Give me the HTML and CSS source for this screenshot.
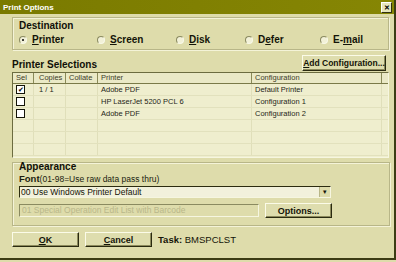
FILE: index.html
```html
<!DOCTYPE html>
<html lang="en">
  <head>
    <meta charset="UTF-8" />
    <title>Print Options</title>
    <link rel="stylesheet" href="styles.css">
  </head>
  <body>
    <div class="window">
      <div class="titlebar">
        <span class="title">Print Options</span>
        <span class="close">&#x2715;</span>
      </div>
      <div class="content">
        <div class="group destination">
          <div class="group-label">Destination</div>
          <div class="radios">
            <label class="radio"><span class="dot checked"></span><u>P</u>rinter</label>
            <label class="radio"><span class="dot"></span><u>S</u>creen</label>
            <label class="radio"><span class="dot"></span><u>D</u>isk</label>
            <label class="radio"><span class="dot"></span>D<u>e</u>fer</label>
            <label class="radio"><span class="dot"></span>E-<u>m</u>ail</label>
          </div>
        </div>

        <div class="section-head">
          <span class="section-title">Printer Selections</span>
          <button class="btn add-btn"><u>A</u>dd Configuration...</button>
        </div>

        <div class="grid">
          <div class="row head">
            <div class="c sel">Sel</div>
            <div class="c copies">Copies</div>
            <div class="c collate">Collate</div>
            <div class="c printer">Printer</div>
            <div class="c config">Configuration</div>
            <div class="c rest"></div>
          </div>
          <div class="row">
            <div class="c sel"><span class="box checked">&#x2714;</span></div>
            <div class="c copies">1 / 1</div>
            <div class="c collate"></div>
            <div class="c printer">Adobe PDF</div>
            <div class="c config">Default Printer</div>
            <div class="c rest"></div>
          </div>
          <div class="row">
            <div class="c sel"><span class="box"></span></div>
            <div class="c copies"></div>
            <div class="c collate"></div>
            <div class="c printer">HP LaserJet 5200 PCL 6</div>
            <div class="c config">Configuration 1</div>
            <div class="c rest"></div>
          </div>
          <div class="row">
            <div class="c sel"><span class="box"></span></div>
            <div class="c copies"></div>
            <div class="c collate"></div>
            <div class="c printer">Adobe PDF</div>
            <div class="c config">Configuration 2</div>
            <div class="c rest"></div>
          </div>
          <div class="row empty">
            <div class="c sel"></div><div class="c copies"></div><div class="c collate"></div>
            <div class="c printer"></div><div class="c config"></div><div class="c rest"></div>
          </div>
          <div class="row empty">
            <div class="c sel"></div><div class="c copies"></div><div class="c collate"></div>
            <div class="c printer"></div><div class="c config"></div><div class="c rest"></div>
          </div>
          <div class="row empty">
            <div class="c sel"></div><div class="c copies"></div><div class="c collate"></div>
            <div class="c printer"></div><div class="c config"></div><div class="c rest"></div>
          </div>
        </div>

        <div class="group appearance">
          <div class="group-label">Appearance</div>
          <div class="font-line"><b>Font</b>(01-98=Use raw data pass thru)</div>
          <div class="combo">
            <span>00 Use Windows Printer Default</span>
            <span class="arrow">&#x25BE;</span>
          </div>
          <div class="option-row">
            <div class="field disabled">01 Special Operation Edit List with Barcode</div>
            <button class="btn options-btn">Options...</button>
          </div>
        </div>

        <div class="footer">
          <button class="btn foot-btn"><u>O</u>K</button>
          <button class="btn foot-btn"><u>C</u>ancel</button>
          <span class="task"><b>Task:</b> BMSPCLST</span>
        </div>
      </div>
    </div>
  </body>
</html>
```

FILE: styles.css
```css
body {
  margin: 0;
  padding: 0;
  font-family: "Liberation Sans", Arial, sans-serif;
  background: #dedcab;
}
.window {
  width: 396px;
  height: 260px;
  box-sizing: border-box;
  background: #dedcab;
  border-right: 2px solid #3c3c14;
  border-bottom: 2px solid #3c3c14;
  overflow: hidden;
}
.titlebar {
  height: 14px;
  display: flex;
  align-items: center;
  justify-content: space-between;
  padding: 0 2px 0 3px;
  background: linear-gradient(to right, #7a7a00, #868604);
}
.title {
  color: #fff;
  font-size: 8px;
  font-weight: bold;
}
.close {
  width: 9px;
  height: 9px;
  line-height: 9px;
  text-align: center;
  font-size: 7px;
  font-weight: bold;
  background: #e6e6bc;
  color: #000;
  border: 1px solid;
  border-color: #fff #303010 #303010 #fff;
}
.content {
  padding: 3px 5px 0 12px;
}
.group {
  box-sizing: border-box;
  border: 1px solid #b8b688;
  box-shadow: inset 1px 1px 0 #f4f3d8, 1px 1px 0 #f4f3d8;
  padding: 2px 0 0 6px;
}
.group-label {
  font-size: 10px;
  font-weight: bold;
  color: #101008;
}
.destination {
  height: 33px;
}
.radios {
  display: grid;
  grid-template-columns: 78px 79px 69px 75px auto;
  margin-top: 3px;
}
.radio {
  display: flex;
  align-items: center;
  font-size: 10px;
  font-weight: bold;
  color: #141408;
}
.dot {
  width: 6px;
  height: 6px;
  border-radius: 50%;
  border: 1px solid;
  border-color: #8a8a60 #f8f8e8 #f8f8e8 #8a8a60;
  background: #f2f1d8;
  margin-right: 5px;
  position: relative;
}
.dot.checked::after {
  content: "";
  position: absolute;
  left: 2px;
  top: 2px;
  width: 2px;
  height: 2px;
  background: #000;
  border-radius: 50%;
}
.section-head {
  display: flex;
  justify-content: space-between;
  align-items: flex-end;
  height: 22px;
  padding-right: 3px;
}
.section-title {
  font-size: 10px;
  font-weight: bold;
  color: #101008;
  padding-bottom: 2px;
}
.btn {
  font-family: "Liberation Sans", Arial, sans-serif;
  font-size: 9px;
  font-weight: bold;
  color: #141408;
  background: #deddae;
  border: 1px solid;
  border-color: #fbfbe8 #2a2a10 #2a2a10 #fbfbe8;
  box-shadow: inset -1px -1px 0 #8c8a5c;
  padding: 0;
  margin: 0;
  white-space: nowrap;
}
.add-btn {
  width: 84px;
  height: 16px;
  margin-bottom: 1px;
  font-size: 8.5px;
}
.grid {
  width: 377px;
  height: 86px;
  box-sizing: border-box;
  background: #efeece;
  border: 1px solid;
  border-color: #6c6c40 #f6f6e0 #f6f6e0 #6c6c40;
  overflow: hidden;
  font-size: 7.5px;
  color: #262618;
}
.row {
  display: flex;
  height: 12px;
  line-height: 12px;
  border-bottom: 1px solid #e2e1bd;
  box-sizing: border-box;
}
.row.head {
  height: 11px;
  line-height: 10px;
  background: #eae9c6;
  border-bottom: 1px solid #7a7a48;
  color: #3c3c28;
}
.c {
  box-sizing: border-box;
  padding-left: 3px;
  border-right: 1px solid #e0dfba;
  white-space: nowrap;
}
.head .c {
  border-right: 1px solid #8a8a58;
}
.sel { width: 21px; }
.copies { width: 32px; padding-left: 5px; }
.collate { width: 32px; }
.printer { width: 154px; }
.config { width: 130px; }
.rest { flex: 1; border-right: none; }
.head .rest { border-right: none; }
.box {
  display: inline-block;
  width: 7px;
  height: 7px;
  border: 1px solid #141408;
  background: #fff;
  vertical-align: middle;
  margin-top: -2px;
  font-size: 7px;
  line-height: 7px;
  text-align: center;
  color: #000;
}
.appearance {
  margin-top: 4px;
  height: 64px;
  width: 378px;
  padding-top: 0;
}
.appearance .group-label {
  margin-top: -1px;
  line-height: 10px;
}
.font-line {
  font-size: 8.5px;
  color: #1c1c10;
  margin-top: 1px;
}
.font-line b {
  font-size: 9.5px;
}
.combo {
  width: 312px;
  height: 12px;
  box-sizing: border-box;
  margin-top: 2px;
  display: flex;
  justify-content: space-between;
  align-items: center;
  background: #f2f1dc;
  border: 1px solid;
  border-color: #2c2c10 #f6f6e0 #f6f6e0 #2c2c10;
  font-size: 8.5px;
  padding-left: 1px;
  color: #141408;
}
.arrow {
  width: 10px;
  height: 10px;
  line-height: 10px;
  text-align: center;
  font-size: 7px;
  background: #dedcab;
  border-left: 1px solid #b8b688;
}
.option-row {
  display: flex;
  align-items: flex-start;
  gap: 6px;
  margin-top: 6px;
}
.field {
  width: 240px;
  height: 13px;
  box-sizing: border-box;
  border: 1px solid;
  border-color: #8a8a60 #f6f6e0 #f6f6e0 #8a8a60;
  font-size: 8.5px;
  line-height: 11px;
  padding-left: 2px;
  white-space: nowrap;
}
.disabled {
  color: #b9b78a;
  background: #dedcab;
}
.options-btn {
  width: 67px;
  height: 15px;
  margin-top: -1px;
}
.footer {
  display: flex;
  align-items: center;
  margin-top: 6px;
}
.foot-btn {
  width: 67px;
  height: 15px;
  margin-right: 6px;
}
.task {
  font-size: 9.5px;
  color: #141408;
}
```
